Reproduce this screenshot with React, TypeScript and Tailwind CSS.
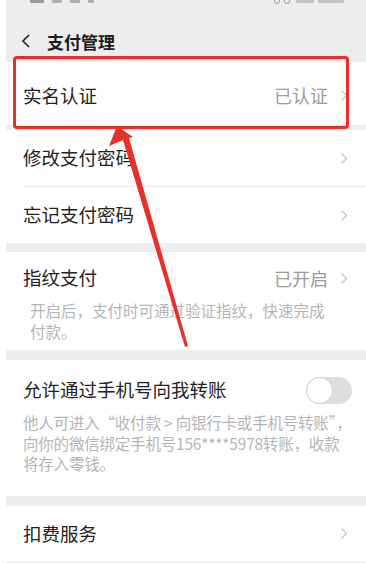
import React from "react";

const font = { fontFamily: '"Noto Sans CJK SC", "Noto Sans", sans-serif' };

function Chevron() {
  return (
    <svg width="8" height="13" viewBox="0 0 8 13" className="shrink-0">
      <path d="M1.5 1.5 L6.5 6.5 L1.5 11.5" fill="none" stroke="#c4c4c4" strokeWidth="1.3" />
    </svg>
  );
}

export default function App() {
  return (
    <div className="relative w-[366px] h-[563px] overflow-hidden bg-white" style={font}>
      <div className="ml-[6px] h-full bg-[#ededed] flex flex-col">
        {/* status bar */}
        <div className="h-[8px] flex items-start justify-between pl-[24px] pr-[22px] overflow-hidden">
          <div className="flex gap-[8px] -mt-[3px]">
            <div className="w-[14px] h-[6px] bg-[#9a9a9a] rounded-[1px]" />
            <div className="w-[10px] h-[6px] bg-[#b0b0b0] rounded-[1px]" />
            <div className="w-[10px] h-[6px] bg-[#b0b0b0] rounded-[1px]" />
            <div className="w-[6px] h-[6px] bg-[#b0b0b0] rounded-[1px]" />
          </div>
          <div className="flex gap-[4px] -mt-[3px]">
            <div className="w-[6px] h-[7px] rounded-full border border-[#9a9a9a]" />
            <div className="w-[6px] h-[7px] rounded-full border border-[#9a9a9a]" />
            <div className="w-[18px] h-[6px] bg-[#c4c4c4] rounded-[1px] ml-[2px]" />
            <div className="w-[26px] h-[6px] bg-[#c4c4c4] rounded-[1px]" />
          </div>
        </div>
        {/* header */}
        <div className="h-[54px] flex items-center pl-[14px] pt-[19px] pb-[7px]">
          <svg width="14" height="16" viewBox="0 0 14 16">
            <path d="M9 2 L3 8 L9 14" fill="none" stroke="#222" strokeWidth="1.6" />
          </svg>
          <span className="ml-[13px] text-[17px] font-bold text-[#1c1c1c] leading-none">支付管理</span>
        </div>
        {/* card 1 */}
        <div className="h-[63px] bg-white flex items-center pl-[17px] pr-[18px] pt-[4px]">
          <span className="flex-1 text-[18.5px] text-[#222]">实名认证</span>
          <span className="text-[18px] text-[#9b9b9b] mr-[12px]">已认证</span>
          <Chevron />
        </div>
        <div className="h-[5px]" />
        {/* card 2 */}
        <div className="bg-white">
          <div className="h-[56px] flex items-center pl-[17px] pr-[18px]">
            <span className="flex-1 text-[18.5px] text-[#222]">修改支付密码</span>
            <Chevron />
          </div>
          <div className="ml-[18px] h-px bg-[#ececec]" />
          <div className="h-[56px] flex items-center pl-[17px] pr-[18px]">
            <span className="flex-1 text-[18.5px] text-[#222]">忘记支付密码</span>
            <Chevron />
          </div>
        </div>
        <div className="h-[9px]" />
        {/* card 3 */}
        <div className="bg-white pt-[14px] pb-[9px] pl-[17px] pr-[18px]">
          <div className="h-[24px] flex items-center">
            <span className="flex-1 text-[18.5px] text-[#222]">指纹支付</span>
            <span className="text-[18px] text-[#9b9b9b] mr-[12px]">已开启</span>
            <Chevron />
          </div>
          <div className="mt-[10px] pl-[7px] text-[15.5px] leading-[20.5px] text-[#b5b5b5]">
            开启后，支付时可通过验证指纹，快速完成
            <br />
            付款。
          </div>
        </div>
        <div className="h-[10px]" />
        {/* card 4 */}
        <div className="bg-white pt-[18px] pb-[22px] pl-[17px] pr-[14px]">
          <div className="h-[24px] flex items-center">
            <span className="flex-1 text-[18.5px] text-[#222]">允许通过手机号向我转账</span>
            <div className="w-[46px] h-[27px] rounded-full bg-[#dedede] relative">
              <div className="absolute left-0 top-0 w-[27px] h-[27px] rounded-full bg-white border border-[#d0d0d0]" />
            </div>
          </div>
          <div className="mt-[10px] text-[15.5px] leading-[20.5px] text-[#b5b5b5] tracking-[-0.2px] whitespace-nowrap">
            他人可进入“收付款 &gt; 向银行卡或手机号转账”，
            <br />
            向你的微信绑定手机号156****5978转账，收款
            <br />
            将存入零钱。
          </div>
        </div>
        <div className="h-[10px]" />
        {/* card 5 */}
        <div className="bg-white h-[57px] flex items-center pl-[17px] pr-[18px] border-b border-[#e4e4e4]">
          <span className="flex-1 text-[18.5px] text-[#222]">扣费服务</span>
          <Chevron />
        </div>
      </div>
      {/* red highlight */}
      <div className="absolute left-[13px] top-[56px] w-[336px] h-[73px] border-[3px] border-[#e8302b] rounded-[4px]" />
      <svg className="absolute left-0 top-0" width="366" height="563" viewBox="0 0 366 563">
        <polygon
          points="117,126 109,146 123,140 185,347 188,346 129,138 133,137"
          fill="#e8302b"
        />
      </svg>
    </div>
  );
}
